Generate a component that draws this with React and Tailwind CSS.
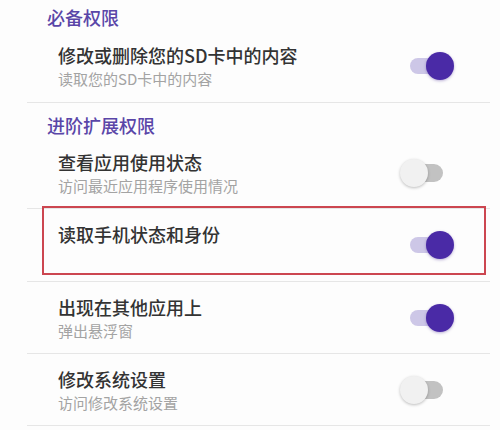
import React from "react";

function Toggle({ on }) {
  if (on) {
    return (
      <div className="relative w-[54px] h-[28px] shrink-0">
        <div className="absolute left-[10px] top-[6px] w-[30px] h-[16px] rounded-full bg-[#cdc7e7]" />
        <div className="absolute left-[26px] top-0 w-[28px] h-[28px] rounded-full bg-[#4a2aa6] shadow-[0_1px_3px_rgba(60,30,140,0.35)]" />
      </div>
    );
  }
  return (
    <div className="relative w-[54px] h-[28px] shrink-0">
      <div className="absolute left-[13px] top-[5px] w-[30px] h-[18px] rounded-full bg-[#c2c2c2]" />
      <div className="absolute left-0 top-0 w-[28px] h-[28px] rounded-full bg-[#f1f1f1] shadow-[0_1px_3px_rgba(0,0,0,0.25)]" />
    </div>
  );
}

function Row({ title, sub, on, h }) {
  return (
    <div className={`flex items-center justify-between pl-[31px] pr-[36px] ${h}`}>
      <div className="flex flex-col">
        <div className="text-[18px] leading-[26px] font-medium text-[#333333]">{title}</div>
        <div className="text-[15px] leading-[22px] text-[#a3a3a3]">{sub}</div>
      </div>
      <Toggle on={on} />
    </div>
  );
}

function Divider() {
  return <div className="h-px bg-[#e6e6e6]" />;
}

export default function App() {
  return (
    <div
      className="w-[500px] h-[430px] overflow-hidden bg-[#fdfdfd] pl-[27px] pr-[10px]"
      style={{ fontFamily: '"Noto Sans CJK SC", "Noto Sans", sans-serif' }}
    >
      <div className="mt-[4px] h-[26px] pl-[20px] text-[18px] leading-[26px] font-medium text-[#5a46a8]">
        必备权限
      </div>
      <Row title="修改或删除您的SD卡中的内容" sub="读取您的SD卡中的内容" on h="h-[72px]" />
      <Divider />
      <div className="pt-[9px] h-[34px] pl-[20px] text-[18px] leading-[26px] font-medium text-[#5a46a8]">
        进阶扩展权限
      </div>
      <Row title="查看应用使用状态" sub="访问最近应用程序使用情况" on={false} h="h-[71px]" />
      <Divider />
      <div className="relative">
        <Row title="读取手机状态和身份" sub={"\u00a0"} on h="h-[72px]" />
        <div className="absolute left-[15px] top-[-3px] w-[444px] h-[69px] border-2 border-[#cc4650]" />
      </div>
      <Divider />
      <Row title="出现在其他应用上" sub="弹出悬浮窗" on h="h-[71px]" />
      <Divider />
      <Row title="修改系统设置" sub="访问修改系统设置" on={false} h="h-[71px]" />
      <Divider />
    </div>
  );
}
